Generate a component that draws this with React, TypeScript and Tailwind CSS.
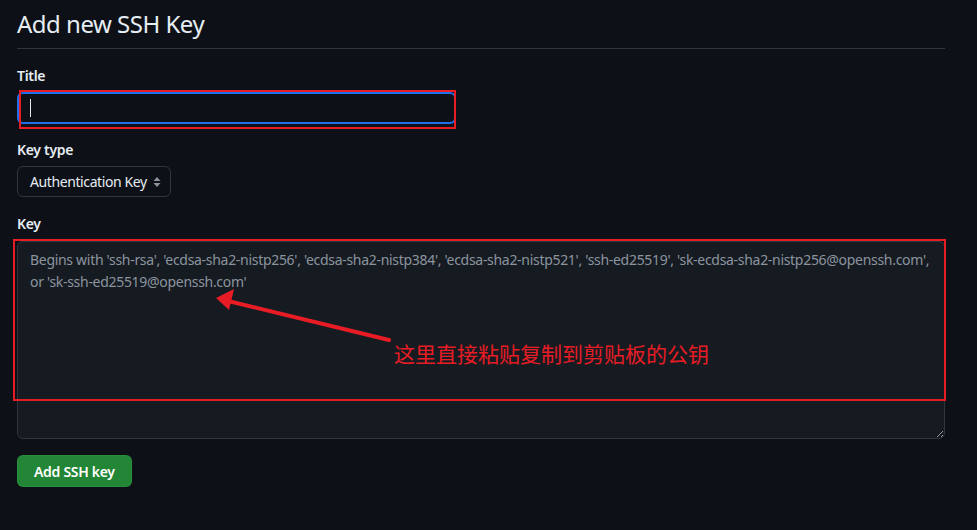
import { useState } from 'react';

const placeholder =
  "Begins with 'ssh-rsa', 'ecdsa-sha2-nistp256', 'ecdsa-sha2-nistp384', 'ecdsa-sha2-nistp521', 'ssh-ed25519', 'sk-ecdsa-sha2-nistp256@openssh.com', or 'sk-ssh-ed25519@openssh.com'";

function SelectArrows() {
  return (
    <svg width="8" height="12" viewBox="0 0 8 12" className="text-[#8b949e]">
      <path d="M4 1 L7.5 5 H0.5 Z" fill="currentColor" />
      <path d="M4 11 L7.5 7 H0.5 Z" fill="currentColor" />
    </svg>
  );
}

function Field({ label, children }: { label: string; children: React.ReactNode }) {
  return (
    <div className="flex flex-col gap-[6px]">
      <label className="text-[14px] leading-[20px] font-semibold tracking-[-0.3px]">{label}</label>
      {children}
    </div>
  );
}

export default function App() {
  const [title, setTitle] = useState('');
  const [key, setKey] = useState('');

  return (
    <div
      className="relative w-[977px] h-[530px] bg-[#0d1117] text-[#e6edf3] overflow-hidden"
      style={{ fontFamily: '"Noto Sans", "Noto Sans CJK SC", sans-serif' }}
    >
      <div className="pl-[17px] w-[945px] flex flex-col">
        <div className="pt-[6px] pb-[6px] border-b border-[#30363d]">
          <h2 className="text-[24px] leading-[36px] font-normal tracking-[-0.5px]">Add new SSH Key</h2>
        </div>

        <div className="flex flex-col gap-[16px] pt-[17px]">
          <Field label="Title">
            <div className="relative w-[439px] h-[32px] rounded-[6px] border-2 border-[#1f6feb] bg-[#0d1117]">
              <input
                value={title}
                onChange={e => setTitle(e.target.value)}
                className="w-full h-full bg-transparent outline-none px-3 text-[14px]"
              />
              <div className="absolute left-[11px] top-[5px] w-px h-[18px] bg-[#e6edf3]" />
            </div>
          </Field>

          <Field label="Key type">
            <div className="w-[154px] h-[31px] rounded-[6px] border border-[#30363d] bg-[#0d1117] flex items-center justify-between pl-[12px] pr-[9px]">
              <span className="text-[14px] tracking-[-0.4px]">Authentication Key</span>
              <SelectArrows />
            </div>
          </Field>

          <div className="flex flex-col gap-[7px] pt-px">
            <label className="text-[14px] leading-[20px] font-semibold tracking-[-0.3px]">Key</label>
            <textarea
              value={key}
              onChange={e => setKey(e.target.value)}
              placeholder={placeholder}
              className="block w-[928px] h-[198px] rounded-[6px] border border-[#30363d] bg-[#161b22] px-[12px] py-[7px] text-[14px] leading-[22px] tracking-[-0.3px] text-[#e6edf3] placeholder:text-[#8b949e] outline-none resize-y [color-scheme:dark]"
            />
          </div>

          <div>
            <button className="h-[32px] px-4 rounded-[6px] bg-[#238636] border border-[#2ea043]/40 text-white text-[14px] font-semibold tracking-[-0.3px]">
              Add SSH key
            </button>
          </div>
        </div>
      </div>

      {/* annotation overlays */}
      <div className="absolute left-[19px] top-[90px] w-[437px] h-[39px] border-2 border-[#e81c24] pointer-events-none" />
      <div className="absolute left-[13px] top-[239px] w-[933px] h-[162px] border-2 border-[#e81c24] pointer-events-none" />
      <svg className="absolute left-0 top-0 pointer-events-none" width="977" height="530">
        <line x1="389" y1="340" x2="228" y2="301" stroke="#e81c24" strokeWidth="4" strokeLinecap="round" />
        <path d="M216 298 L234 289 L229 310 Z" fill="#e81c24" />
      </svg>
      <div
        className="absolute left-[394px] top-[339px] text-[21px] leading-[28px] text-[#e81c24] pointer-events-none"
        style={{ fontFamily: '"Noto Sans CJK SC", sans-serif' }}
      >
        这里直接粘贴复制到剪贴板的公钥
      </div>
    </div>
  );
}
